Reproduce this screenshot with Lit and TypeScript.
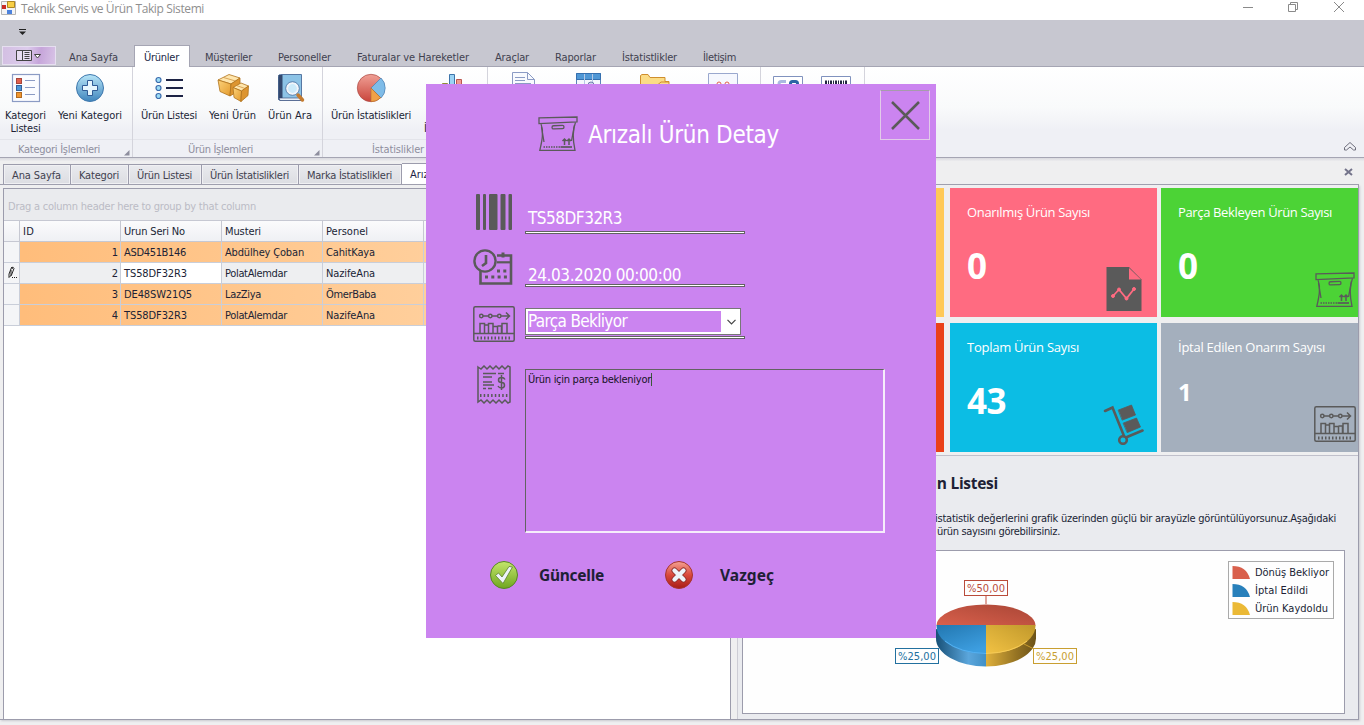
import { LitElement, html, css, svg, nothing } from "lit";
import { customElement, property } from "lit/decorators.js";

/** Label whose tracking is adjusted so that it spans the given width. */
@customElement("fit-text")
class FitText extends LitElement {
  @property({ type: Number }) w = 0;
  static styles = css`:host { display: inline-block; white-space: pre; }`;
  firstUpdated() {
    const n = (this.textContent || "").length;
    const natural = this.getBoundingClientRect().width;
    if (n && this.w) this.style.letterSpacing = `${(this.w - natural) / n}px`;
  }
  render() { return html`<slot></slot>`; }
}

const icon = (body: unknown, w = 32, h = 32) =>
  html`<svg class="ico" width=${w} height=${h} viewBox="0 0 ${w} ${h}">${body}</svg>`;

const G = "#5a5a5a";

const boxIcon = html`<svg width="40" height="36" viewBox="0 0 40 36" fill="none" stroke=${G} stroke-width="1.3">
  <path d="M1 1.8 39 1v4.8L1 7.6z M3 7.6C6 16 4 25 1.8 34.4H37C35 25 34 15 37.6 6"/>
  <path d="M3.5 11 6 26 M36.5 9 33.5 25"/><rect x="14" y="9.6" width="12" height="3.2" rx="1.6" transform="rotate(-2 20 11)"/>
  <path d="M5.500 31H22" stroke-dasharray="1.5 1"/><path d="M22.500 31H34" stroke-width="1.700"/>
  <path d="M26.500 29v-6m-2 2 2-2 2 2 M31 29v-6m-2 2 2-2 2 2" stroke-width="1.500"/></svg>`;

const statsIcon = html`<svg width="42" height="36" viewBox="0 0 42 36" fill="none" stroke=${G} stroke-width="1.5">
  <rect x=".8" y=".8" width="40.400" height="34.400" rx="1.5"/><path d="M1 27.500h40"/>
  <path d="M4 32h35" stroke-width="3" stroke-dasharray="1.500 2"/>
  <circle cx="8.300" cy="10" r="1.700"/><circle cx="17.300" cy="10" r="1.700"/><circle cx="26.300" cy="10" r="1.700"/>
  <path d="M10 10h5.500m3.600 0h5.500m3.500 0h8 M33 6.500 36.500 10 33 13.500"/>
  <path d="M7 27v-9.500h4.500V27 M11.500 19h4v8 M15.500 27v-9.500H20V27 M20 20.500h4.500V27 M24.500 20h4v7 M29 27v-9.500h5V27"/></svg>`;

const kategoriIcon = icon(svg`<rect x="2.500" y="2.500" width="27" height="27" fill="#fbfcff" stroke="#8b9bc4" stroke-width="1.200"/>
  <rect x="6.500" y="6.500" width="5" height="5" fill="#e2604c" stroke="#a8453c"/><rect x="6.500" y="13.500" width="5" height="5" fill="#4c96d8" stroke="#34619b"/>
  <rect x="6.500" y="20.500" width="5" height="5" fill="#f0962f" stroke="#b26a22"/><path d="M15 8.500h10m-10 7h10m-10 7h10" stroke="#8b9bc4"/>`);
const plusIcon = icon(svg`<defs><linearGradient id="b" x2="0" y2="1"><stop stop-color="#b8e6f8"/><stop offset="1" stop-color="#3f85bd"/></linearGradient></defs>
  <circle cx="16" cy="16" r="13.500" fill="url(#b)" stroke="#3f78ad"/><path d="M13.500 8.500h5v5h5v5h-5v5h-5v-5h-5v-5h5z" fill="#e6f6fd" stroke="#2f5b96"/>`);
const listIcon = icon(svg`<path d="M13 8h17m-17 8h17m-17 8h17" stroke="#1d2345" stroke-width="2"/>
  ${[8, 16, 24].map((y) => svg`<circle cx="5.500" cy=${y} r="2.500" fill="#9ddcf5" stroke="#3c6cad" stroke-width="1.200"/>`)}`);
const boxesIcon = icon(svg`<defs><linearGradient id="w" x2="1" y2="1"><stop stop-color="#fcd27a"/><stop offset="1" stop-color="#e39a2c"/></linearGradient></defs>
  <g stroke="#b0721c" stroke-width=".8" stroke-linejoin="round">
  <path d="m1 8 11-5.500L23 6l-9 6z" fill="#ffe6ad"/><path d="m1 8 13 4-1 12L3 19.500z" fill="url(#w)"/><path d="m14 12 9-6v12l-10 6z" fill="#dd9530"/>
  <path d="m16 15.500 8-4.500 7.500 3-7 5z" fill="#ffe6ad"/><path d="m16 15.500 8.500 3.500-.5 10.500-7-4z" fill="url(#w)"/><path d="m24.500 19 7-5-.5 9.500-7 6z" fill="#dd9530"/></g>
  <path d="M6.500 5.500 18.500 9M19.500 13.500l8.500 3" stroke="#c88a33" stroke-width=".7"/>`);
const searchIcon = icon(svg`<path d="M4.500 4.500q0-2 2-2h21v26h-21q-2 0-2-2z" fill="#8cc3e6" stroke="#5777a2"/><path d="M4.500 3h4v25h-4z" fill="#33486e"/>
  <path d="M5 26h22v2.500H6z" fill="#e8f0f8" stroke="#2d4270" stroke-width=".6"/><circle cx="18.500" cy="16.500" r="5.500" fill="#cdebfa" stroke="#f1f5fa" stroke-width="2.200"/>
  <circle cx="18.500" cy="16.500" r="6.800" fill="none" stroke="#5272a0" stroke-width=".8"/><path d="m24 23 4.500 5" stroke="#c47b2f" stroke-width="3.500" stroke-linecap="round"/>`);
const pieIcon = icon(svg`<defs><linearGradient id="pr" x2="0" y2="1"><stop stop-color="#f0a096"/><stop offset="1" stop-color="#c9453b"/></linearGradient></defs>
  <circle cx="16" cy="16" r="13.700" fill="url(#pr)" stroke="#aa4a45" stroke-width=".7"/>
  <path d="M16 16 26 6a14 14 0 0 1 0 20z" fill="#7fbce8" stroke="#3d78ae" stroke-width=".6"/><path d="m16 16 9.700 9.700A14 14 0 0 1 16 29.700z" fill="#f1a148" stroke="#b36e27" stroke-width=".6"/>`);
const barsIcon = icon(svg`<path d="M5.500 11.500h5v18h-5z" fill="#e6d872" stroke="#8f8b35"/><path d="M12.500 2.500h5v27h-5z" fill="#9bd3f4" stroke="#3d74aa"/><path d="M19.500 7.500h5v22h-5z" fill="#f09a92" stroke="#bb5750"/>`);
const docIcon = icon(svg`<path d="M5.500.5h15l7 7v24h-22z" fill="#f8fafe" stroke="#8b9bc4"/><path d="M20.500.5v7h7" fill="none" stroke="#8b9bc4"/><path d="M8 5.500h10m-10 3h10m-10 3h16" stroke="#8b9bc4"/>`);
const tableIcon = icon(svg`<path d="M4.500 1.500h24v28h-24z" fill="#f4f7fd" stroke="#5c84b8"/><path d="M4.500 1.500h24v6h-24z" fill="#4f97d5" stroke="#356fae"/><path d="M12.500 2v27m8-27v27" stroke="#b5c8e4"/><circle cx="19" cy="13" r="3" fill="#ccd3eb" stroke="#6f7eac"/>`);
const folderIcon = icon(svg`<path d="M1.500 29V3.500l1.500-1h6l2 3h15v4h4V29z" fill="#fbdc86" stroke="#cf8e2d"/><path d="M19 12.500 22 10h8" stroke="#cf8e2d" fill="none"/>`);
const percentIcon = icon(svg`<path d="M1.500 1.500h29v28h-29z" fill="#f6f8fe" stroke="#9aa8ce"/><circle cx="12" cy="12" r="2" fill="none" stroke="#e2604c"/><circle cx="20" cy="12" r="2" fill="none" stroke="#e2604c"/>`);
const qrIcon = icon(svg`<path d="M1.500 4.500h29v24h-29z" fill="#fff" stroke="#8092be"/><path d="M7 17v-5q0-2.500 2.500-2.500H14" fill="none" stroke="#a9b9e0" stroke-width="3"/><rect x="18.500" y="9.500" width="7" height="10" rx="2" fill="none" stroke="#2c65a4" stroke-width="3"/>`);
const codeIcon = icon(svg`<path d="M1.500 4.500h29v24h-29z" fill="#fff" stroke="#8092be"/><path d="M5 13.500h22" stroke="#222741" stroke-width="10" stroke-dasharray="2 1 1 1"/>`);

type Item = { i: unknown; w: number; t: [string, number][] };
const GROUPS: { w: number; cap: string; cw: number; items: Item[] }[] = [
  { w: 132, cap: "Kategori İşlemleri", cw: 82, items: [
    { i: kategoriIcon, w: 51, t: [["Kategori", 41], ["Listesi", 30]] }, { i: plusIcon, w: 78, t: [["Yeni Kategori", 64]] }] },
  { w: 189, cap: "Ürün İşlemleri", cw: 65, items: [
    { i: listIcon, w: 72, t: [["Ürün Listesi", 56]] }, { i: boxesIcon, w: 55, t: [["Yeni Ürün", 47]] }, { i: searchIcon, w: 60, t: [["Ürün Ara", 44]] }] },
  { w: 164, cap: "İstatislikler", cw: 52, items: [
    { i: pieIcon, w: 96, t: [["Ürün İstatislikleri", 80]] }, { i: barsIcon, w: 68, t: [["Marka", 28], ["İstatislikleri", 58]] }] },
  { w: 272, cap: "", cw: 0, items: [{ i: docIcon, w: 70, t: [] }, { i: tableIcon, w: 60, t: [] }, { i: folderIcon, w: 73, t: [] }, { i: percentIcon, w: 64, t: [] }] },
  { w: 103, cap: "", cw: 0, items: [{ i: qrIcon, w: 54, t: [] }, { i: codeIcon, w: 42, t: [] }] },
];

const MENU: [string, number][] = [["Ana Sayfa", 49], ["Ürünler", 35], ["Müşteriler", 47], ["Personeller", 53], ["Faturalar ve Hareketler", 112],
  ["Araçlar", 34], ["Raporlar", 41], ["İstatistlikler", 55], ["İletişim", 33]];
const DOCS: [string, number][] = [["Ana Sayfa", 49], ["Kategori", 40], ["Ürün Listesi", 55], ["Ürün İstatislikleri", 79], ["Marka İstatislikleri", 85], ["Arızalı Ürünler", 70]];
const ROWS: [string, number, string, number, string, number][] = [
  ["ASD451B146", 62, "Abdülhey Çoban", 79, "CahitKaya", 49],
  ["TS58DF32R3", 63, "PolatAlemdar", 62, "NazifeAna", 49],
  ["DE48SW21Q5", 68, "LazZiya", 36, "ÖmerBaba", 50],
  ["TS58DF32R3", 63, "PolatAlemdar", 62, "NazifeAna", 49],
];

@customElement("app-root")
class AppRoot extends LitElement {
  static styles = css`
    :host { display: block; position: relative; width: 1364px; height: 725px; overflow: hidden; background: #efeff0;
      font: 11px/13px "DejaVu Sans Condensed", "DejaVu Sans", sans-serif; font-stretch: condensed; color: #201f35; }
    * { box-sizing: border-box; }
    svg { display: block; flex: none; }
    .title { height: 20px; background: #fff; display: flex; align-items: flex-start; font: 12px/17px "Open Sans", sans-serif; color: #8f8f8f; padding-left: 1px; }
    .title .name { margin-left: 5px; flex: 1; }
    .head { height: 47px; background: #c7c7d0; border-bottom: 1px solid #a5a5b3; display: flex; flex-direction: column; justify-content: space-between; }
    .quick { padding: 9px 0 0 18px; }
    .menu { display: flex; height: 21px; align-items: flex-start; color: #41414f; padding-left: 2px; }
    .app { width: 54px; height: 19px; margin-top: 1px; border: 1px solid #e6dff0; background: linear-gradient(100deg, #d3bfe2, #dccbec 45%, #c6a5da 70%, #d8c4e6); }
    .mt { height: 22px; margin: 0 3px 0; padding: 6px 10px 0; }
    .mt.on { background: #fff; border: 1px solid #a5a5b3; border-bottom: 0; padding: 5px 10px 0 9px; margin-right: 2px; color: #201f45; }
    .ribbon { height: 91px; display: flex; background: linear-gradient(#fff, #f9fafb 45%, #eff0f5 70%, #eff0f5); border-bottom: 1px solid #a5a5b3; }
    .group { display: flex; flex-direction: column; border-right: 1px solid #d4d4dc; box-sizing: content-box; }
    .items { display: flex; height: 72px; padding-top: 5px; }
    .item { display: flex; flex-direction: column; align-items: center; flex: none; white-space: nowrap; }
    .ico { margin-bottom: 5px; }
    .cap { height: 18px; border-top: 1px solid #e3e4ea; color: #8e8e9e; display: flex; justify-content: center; align-items: flex-start; padding: 3px 0 0; }
    .cap .mid { flex: 1; text-align: center; padding-right: 17px; margin-left: 3px; }
    .cap svg { margin: 7px 2px 0 -8px; }
    .fold { margin: 74px 7px 0 auto; }
    .shade { height: 3px; background: linear-gradient(#d9d9df, #ececee); }
    .docs { height: 24px; display: flex; align-items: flex-end; padding-left: 3px; border-bottom: 1px solid #9c9cac; color: #41414f; margin-right: 5px; }
    .dt { height: 20px; border: 1px solid #9c9cac; border-bottom: 0; padding: 4px 9px 0 8px; background: linear-gradient(#e9eaee, #dcdde2); box-shadow: inset 0 0 0 1px #f0f0f3; }
    .dt + .dt { border-left: 0; }
    .dt.on { background: #fff; height: 21px; box-shadow: none; color: #201f45; }
    .docs .x { margin: 0 1px 8px auto; }
    .main { height: 535px; display: flex; border-right: 1px solid #9c9cac; border-bottom: 1px solid #9c9cac; margin-right: 5px; padding-left: 3px; box-shadow: 1px 1px 2px #c9c9cf; }
    .left { width: 728px; margin-top: 3px; border: 1px solid #9c9cac; border-bottom: 0; background: #fff; overflow: hidden; }
    .drag { height: 32px; background: #eaebee; color: #bbbbc5; padding: 11px 0 0 4px; }
    .row { display: grid; grid-template-columns: 16px repeat(6, 101px) 1fr; height: 21px; }
    .row > div { border-right: 1px solid #c9ced9; border-bottom: 1px solid #c9ced9; padding: 4px 0 0 3px; white-space: nowrap; }
    .row.h > div { background: linear-gradient(#fbfbfc, #eff0f4); border-color: #c6c8d2; box-shadow: 0 -1px #c6c8d2; }
    .row.o { background: linear-gradient(90deg, #ffbd7b 20px, #ffdcb4 728px); }
    .row.s { background: #eeeff1; }
    .row > .ind { background: #f4f5f7; padding: 3px 0 0 3px; }
    .row > .id { text-align: right; padding-right: 2px; }
    .row > .edit { background: #fff; }
    .right { flex: 1; margin-left: 6px; display: flex; flex-direction: column; border-left: 1px solid #cdcdd5; }
    .tiles { display: grid; grid-template-columns: 206px 207px 197px; grid-template-rows: 129px 129px; row-gap: 6px; column-gap: 4px; padding-top: 3px; height: 270px; font-family: "Open Sans", sans-serif; font-stretch: normal; color: #fff; }
    .tile { padding: 15px 0 0 17px; display: flex; flex-direction: column; align-items: flex-start; font-size: 13px; line-height: 18px; }
    .tile b { font-size: 35px; line-height: 40px; margin: 25px 0 -40px; }
    .tile b.sm { font-size: 24px; line-height: 30px; margin: 21px 0 -30px; }
    .tile svg { margin: auto 2px 10px auto; }
    .y { background: #ffc957; } .r { background: #ea4118; }
    .p { background: #ff6b81; } .g { background: #4cd336; } .c { background: #0cbde4; } .a { background: #a4afbd; }
    .p, .c { margin-left: 2px; width: 207px; }
    .g, .a { margin-left: 2px; width: 197px; }
    .g svg { margin: auto 3px 9px auto; }
    .p svg { margin: auto 15px 6px auto; } .c svg { margin: auto 13px 7px auto; }
    .info { flex: 1; border-top: 1px solid #c0c0cb; background: #eaebef; padding: 16px 13px 4px 4px; display: flex; flex-direction: column; }
    .info h2 { margin: 0; width: 256px; text-align: right; font: bold 15.5px/22px "Open Sans", sans-serif; font-stretch: normal; letter-spacing: -0.28px; }
    .info p { margin: 18px 0 0 193px; display: flex; flex-direction: column; align-items: flex-start; white-space: nowrap; }
    .info .l2 { margin-left: 2px; }
    .chart { margin-top: 12px; height: 164px; border: 1px solid #9c9cac; background: #fefefe; flex: none; }
    .dlg { position: absolute; left: 426px; top: 84px; width: 510px; height: 554px; background: #cb84f0; display: flex; flex-direction: column; }
    .dh { display: flex; height: 110px; padding: 6px 6px 0 112px; align-items: flex-start; }
    .dh > svg { margin-top: 26px; }
    .dh .t { margin: 29px 0 0 10px; font-size: 24px; line-height: 32px; color: #fff; }
    .close { margin-left: auto; width: 50px; height: 50px; border: 1px solid #e2cbe9; border-top-color: #a69bab; padding: 9px; }
    .field { display: flex; padding-left: 47px; align-items: flex-start; }
    .fi { width: 42px; margin-right: 10px; display: flex; justify-content: center; }
    .fb { width: 220px; display: flex; flex-direction: column; color: #fff; font-size: 17px; line-height: 20px; }
    .val { padding-left: 3px; height: 20px; }
    .ul { height: 3px; border: 1px solid #626262; background: #fff; }
    .f1 { height: 55px; } .f1 .val { margin: 14px 0 3px; }
    .f2 { height: 57px; } .f2 .val { margin: 16px 0 -1px; }
    .f3 { height: 59px; }
    .combo { width: 216px; height: 27px; margin: 2px 0 1px; background: #fff; border: 1px solid #777; display: flex; align-items: center; padding-left: 2px; }
    .sel { width: 193px; height: 21px; background: #cb84f0; line-height: 20px; margin-right: 6px; }
    .area { width: 360px; height: 164px; margin-top: 4px; border: 1px solid #626262; border-right: 2px solid #f6edfb; border-bottom: 2px solid #f6edfb; color: #161226; padding: 3px 0 0 2px; display: flex; align-items: flex-start; }
    .area .in { border-right: 1px solid #3b5a3b; height: 13px; }
    .btns { display: flex; margin-top: 27px; padding-left: 63px; align-items: center; font: bold 15.5px/20px "Noto Sans", sans-serif; font-stretch: normal; height: 30px; }
    .b1 { margin: 0 60px 0 20px; } .b2 { margin: 0 0 0 26px; }
  `;

  private line(t: [string, number]) { return html`<fit-text w=${t[1]}>${t[0]}</fit-text>`; }

  private ribbon() {
    return html`<div class="ribbon">${GROUPS.map((g) => html`
      <div class="group" style="width:${g.w}px">
        <div class="items">${g.items.map((i) => html`<div class="item" style="width:${i.w}px">${i.i}${i.t.map(this.line)}</div>`)}</div>
        <div class="cap">${g.cap ? html`<div class="mid"><fit-text w=${g.cw}>${g.cap}</fit-text></div>
          <svg width="6" height="6"><path d="M5.500 0v5.500H0z" fill="#8e8e9e"/></svg>` : nothing}</div>
      </div>`)}
      <svg class="fold" width="14" height="12" fill="none" stroke="#6d6d7b"><path d="M7 1.500 1.500 6.500v2.500h2L7 6l3.500 3h2V6.500z"/></svg></div>`;
  }

  private grid() {
    const head: [string, number][] = [["ID", 11], ["Urun Seri No", 61], ["Musteri", 36], ["Personel", 42]];
    return html`<div class="left">
      <div class="drag"><fit-text w="248">Drag a column header here to group by that column</fit-text></div>
      <div class="row h"><div></div>${head.map((h) => html`<div>${this.line(h)}</div>`)}<div></div><div></div><div></div></div>
      ${ROWS.map((r, i) => html`<div class="row ${i === 1 ? "s" : "o"}">
        <div class="ind">${i === 1 ? html`<svg width="10" height="14" fill="none" stroke="#222"><path d="m2 8 2.500-6.500q2-1 2.500 1L4.500 9 2 11.500zm2-6.500 2 1M4 4v6"/><path d="M5 11.500h5" stroke-dasharray="1 1"/></svg>` : nothing}</div>
        <div class="id">${i + 1}</div><div class=${i === 1 ? "edit" : ""}>${this.line([r[0], r[1]])}</div>
        <div>${this.line([r[2], r[3]])}</div><div>${this.line([r[4], r[5]])}</div><div></div><div></div><div></div></div>`)}
    </div>`;
  }

  private chart() {
    const legend: [string, string, number][] = [["#d9604c", "Dönüş Bekliyor", 74], ["#2880bb", "İptal Edildi", 53], ["#ebb936", "Ürün Kaydoldu", 73]];
    const tag = (x: number, y: number, c: string, s: string) => svg`<rect x=${x + 0.5} y=${y + 0.5} width="43" height="15" fill="#fefefe" stroke=${c}/>
      <text x=${x + 3} y=${y + 12} fill=${c} textLength="38">${s}</text>`;
    return html`<div class="chart"><svg width="601" height="162" viewBox="743 551 601 162" font-size="11">
      <defs>
        <linearGradient id="rd" x2="1" y1="1" y2="0"><stop stop-color="#d9604c"/><stop offset="1" stop-color="#a94636"/></linearGradient>
        <linearGradient id="bl" x2=".6" y2="1"><stop stop-color="#2277b0"/><stop offset="1" stop-color="#3d9ee0"/></linearGradient>
        <linearGradient id="yl" x1="1" x2="0" y2="1"><stop stop-color="#c0982b"/><stop offset="1" stop-color="#f2c244"/></linearGradient>
        <linearGradient id="bs"><stop stop-color="#175077"/><stop offset=".65" stop-color="#5ba6dc"/><stop offset="1" stop-color="#4190c6"/></linearGradient>
        <linearGradient id="ys"><stop stop-color="#dfb03c"/><stop offset=".6" stop-color="#967423"/><stop offset="1" stop-color="#6b5218"/></linearGradient>
      </defs>
      <path d="M986 604v-10" stroke="#c14f3d"/>
      <path d="M936 629v9a50 28 0 0 0 50 28.500V640z" fill="url(#bs)"/><path d="M1036 629v9a50 28 0 0 1-50 28.500V640z" fill="url(#ys)"/>
      <path d="M936.500 625.500a49.500 21 0 0 1 99 0z" fill="url(#rd)"/>
      <path d="M936.500 625H986v28.500c-30 0-50-13-49.500-28.500z" fill="url(#bl)"/><path d="M1035.500 625H986v28.500c30 0 50-13 49.500-28.500z" fill="url(#yl)"/>
      <path d="M945 641q15 12 41 12.500" fill="none" stroke="#55b1f2"/><path d="M986 653.500q26-.500 41-12.500" fill="none" stroke="#f8cc58"/>
      <path d="m1024 644 10 5" stroke="#c99c2c"/>
      ${tag(964, 580, "#b94b3a", "%50,00")}${tag(895, 648, "#22709f", "%25,00")}${tag(1033, 648, "#c99f31", "%25,00")}
      <rect x="1228.500" y="561.500" width="105" height="57" fill="#fefefe" stroke="#aaa"/>
      ${legend.map((l, i) => svg`<path d="M1232.500 ${566 + i * 18}q14 0 17.500 13h-17.500z" fill=${l[0]}/>
        <text x="1255" y=${576 + i * 18} fill="#201f35" textLength=${l[2]}>${l[1]}</text>`)}
    </svg></div>`;
  }

  private dialog() {
    return html`<div class="dlg">
      <div class="dh">${boxIcon}<div class="t"><fit-text w="191">Arızalı Ürün Detay</fit-text></div>
        <div class="close"><svg width="30" height="30"><path d="m2 2 27 27M29 2 2 29" stroke=${G} stroke-width="2.500"/></svg></div></div>
      <div class="field f1"><div class="fi"><svg width="36" height="36" fill=${G}><rect width="4" height="36" rx="1"/><rect x="7" width="3" height="36" rx="1"/><rect x="13" width="8.500" height="36" rx="1"/><rect x="24.500" width="5" height="36" rx="1"/><rect x="32.500" width="3.500" height="36" rx="1"/></svg></div>
        <div class="fb"><div class="val"><fit-text w="94">TS58DF32R3</fit-text></div><div class="ul"></div></div></div>
      <div class="field f2"><div class="fi"><svg width="42" height="36" fill="none" stroke=${G}>
          <path d="M24 6.500h14V34.500H7.500V22" stroke-width="2.600"/><path d="M24 13.300h14" stroke-width="2.200"/><path d="M30 3.500v5" stroke-width="3"/>
          <circle cx="12" cy="12" r="10.600" stroke-width="2.400"/><path d="M13 6v8l-4 3" stroke-width="2.600"/>
          <path d="M24 22h10M12 28h23" stroke-width="3" stroke-dasharray="3 3.300"/></svg></div>
        <div class="fb"><div class="val"><fit-text w="153">24.03.2020 00:00:00</fit-text></div><div class="ul"></div></div></div>
      <div class="field f3"><div class="fi">${statsIcon}</div>
        <div class="fb"><div class="combo"><div class="sel"><fit-text w="99">Parça Bekliyor</fit-text></div><svg width="9" height="6"><path d="M.5.800 4.500 4.800 8.500.8" fill="none" stroke="#444" stroke-width="1.200"/></svg></div><div class="ul"></div></div></div>
      <div class="field"><div class="fi"><svg width="34" height="39" fill="none" stroke=${G} stroke-width="1.500">
          <path d="M1 2l3 2 3-3 3 3 3-3 3 3 3-3 3 3 3-3 3 3 3-3 2 1V37l-2 1-3-3-3 3-3-3-3 3-3-3-3 3-3-3-3 3-3-3-3 2z"/>
          <path d="M6 8.500h13M21 8.500h6M6 12h9M6 17h9M6 20h11M6 23.500h3m2 0h4"/><path d="M28 14.500q-1-2-3.500-2-3 0-3 2.500t3 2.500 3 2.700-3 2.800q-2.500 0-3.500-2M24.500 10v15"/>
          <path d="M3 30.500h29" stroke-width="3" stroke-dasharray="1.500 2.200"/></svg></div>
        <div class="area"><div class="in"><fit-text w="123">Ürün için parça bekleniyor</fit-text></div></div></div>
      <div class="btns"><svg width="30" height="30"><defs><linearGradient id="gr" x2="0" y2="1"><stop stop-color="#c4e66c"/><stop offset="1" stop-color="#6fa61f"/></linearGradient></defs>
          <circle cx="15" cy="15" r="13.500" fill="url(#gr)" stroke="#578723"/><path d="m6.500 15.500 3-2.500 3.500 4L20 6.500l3.500.500-9.500 16.500z" fill="#eef4fa" stroke="#5c7d2e" stroke-width=".8"/></svg>
        <div class="b1"><fit-text w="65">Güncelle</fit-text></div>
        <svg width="30" height="30"><defs><linearGradient id="re" x2="0" y2="1"><stop stop-color="#f5a293"/><stop offset=".5" stop-color="#d9493c"/><stop offset="1" stop-color="#a81c17"/></linearGradient></defs>
          <circle cx="15" cy="15" r="13.500" fill="url(#re)" stroke="#a5342e"/><path d="m10.500 10.500 9 9m0-9-9 9" stroke="#8e302d" stroke-width="6" stroke-linecap="round"/><path d="m10.500 10.500 9 9m0-9-9 9" stroke="#eef4fa" stroke-width="4.300" stroke-linecap="round"/></svg>
        <div class="b2"><fit-text w="54">Vazgeç</fit-text></div></div>
    </div>`;
  }

  render() {
    return html`
      <div class="title"><svg width="15" height="16"><path d="M.5 1.500h14v13H.5z" fill="#f4f4f4" stroke="#b5b5b5"/><path d="M6.500 1.500h7v6h-7z" fill="#f8cf45" stroke="#ae8723"/><path d="M1 5h4v4H1z" fill="#c92b25"/><path d="M6 10h5v4H6z" fill="#4c82dd"/></svg>
        <div class="name"><fit-text w="183">Teknik Servis ve Ürün Takip Sistemi</fit-text></div>
        <svg width="121" height="16" fill="none" stroke="#8a8a8a"><path d="M0 7.500h10"/><path d="M45.500 4.500h7v7h-7zM47.500 4v-1.500h7v7H53M91 2l10 10M101 2 91 12"/></svg></div>
      <div class="head">
        <div class="quick"><svg width="9" height="6"><path d="M1 .5h7" stroke="#222"/><path d="M1 2.500h7L4.500 6z" fill="#222"/></svg></div>
        <div class="menu"><div class="app"><svg width="52" height="17" fill="none" stroke="#444"><path d="M13.500 3.500h15v10h-15zM19.500 3.500v10M21.500 5.500h5m-5 2h5m-5 2h5m-5 2h5" fill="#fff6"/><path d="M31.500 7.500h6l-3 3.500z" fill="#fff"/></svg></div>
          ${MENU.map((m, i) => html`<div class="mt ${i === 1 ? "on" : ""}">${this.line(m)}</div>`)}</div>
      </div>
      ${this.ribbon()}
      <div class="shade"></div>
      <div class="docs">${DOCS.map((d, i) => html`<div class="dt ${i === 5 ? "on" : ""}">${this.line(d)}</div>`)}
        <svg class="x" width="18" height="8"><path d="m5 1 7 6M12 1 5 7" stroke="#73738a" stroke-width="2"/></svg></div>
      <div class="main">${this.grid()}
        <div class="right">
          <div class="tiles">
            <div class="tile y"></div>
            <div class="tile p"><fit-text w="123">Onarılmış Ürün Sayısı</fit-text><b>0</b>
              <svg width="36" height="44"><path d="M.500 0H23L35.500 12.500V44H.5z" fill=${G}/><path d="M23 1v11.500h12z" fill="#ff6b81"/><g fill="#ff6b81" stroke="#ff6b81"><path d="m7 29 6-6.500 7.500 9 7.500-9.500" fill="none" stroke-width="1.800"/><circle cx="7" cy="29" r="1.500"/><circle cx="13" cy="22.500" r="1.500"/><circle cx="20.500" cy="31.500" r="1.500"/><circle cx="28" cy="22" r="1.500"/></g></svg></div>
            <div class="tile g"><fit-text w="154">Parça Bekleyen Ürün Sayısı</fit-text><b>0</b>${boxIcon}</div>
            <div class="tile r"></div>
            <div class="tile c"><fit-text w="112">Toplam Ürün Sayısı</fit-text><b><fit-text w="39">43</fit-text></b>
              <svg width="41" height="42" fill="none" stroke=${G} stroke-width="2.600" stroke-linecap="round"><path d="m2 8 7.500-3.500L21 33"/><circle cx="20" cy="37" r="3.800"/><path d="m24 34 15.500-6.500"/><path d="m15.500 7 13-5 4 10-13 5zM20.500 20l13-5 4 9-13 5.500z" fill=${G} stroke-width=".8"/></svg></div>
            <div class="tile a"><fit-text w="147">İptal Edilen Onarım Sayısı</fit-text><b class="sm">1</b>${statsIcon}</div>
          </div>
          <div class="info"><h2>Arızalı Ürün Listesi</h2>
            <p><fit-text w="401">istatistik değerlerini grafik üzerinden güçlü bir arayüzle görüntülüyorsunuz.Aşağıdaki</fit-text><fit-text class="l2" w="123">ürün sayısını görebilirsiniz.</fit-text></p>
            ${this.chart()}</div>
        </div>
      </div>
      ${this.dialog()}`;
  }
}
